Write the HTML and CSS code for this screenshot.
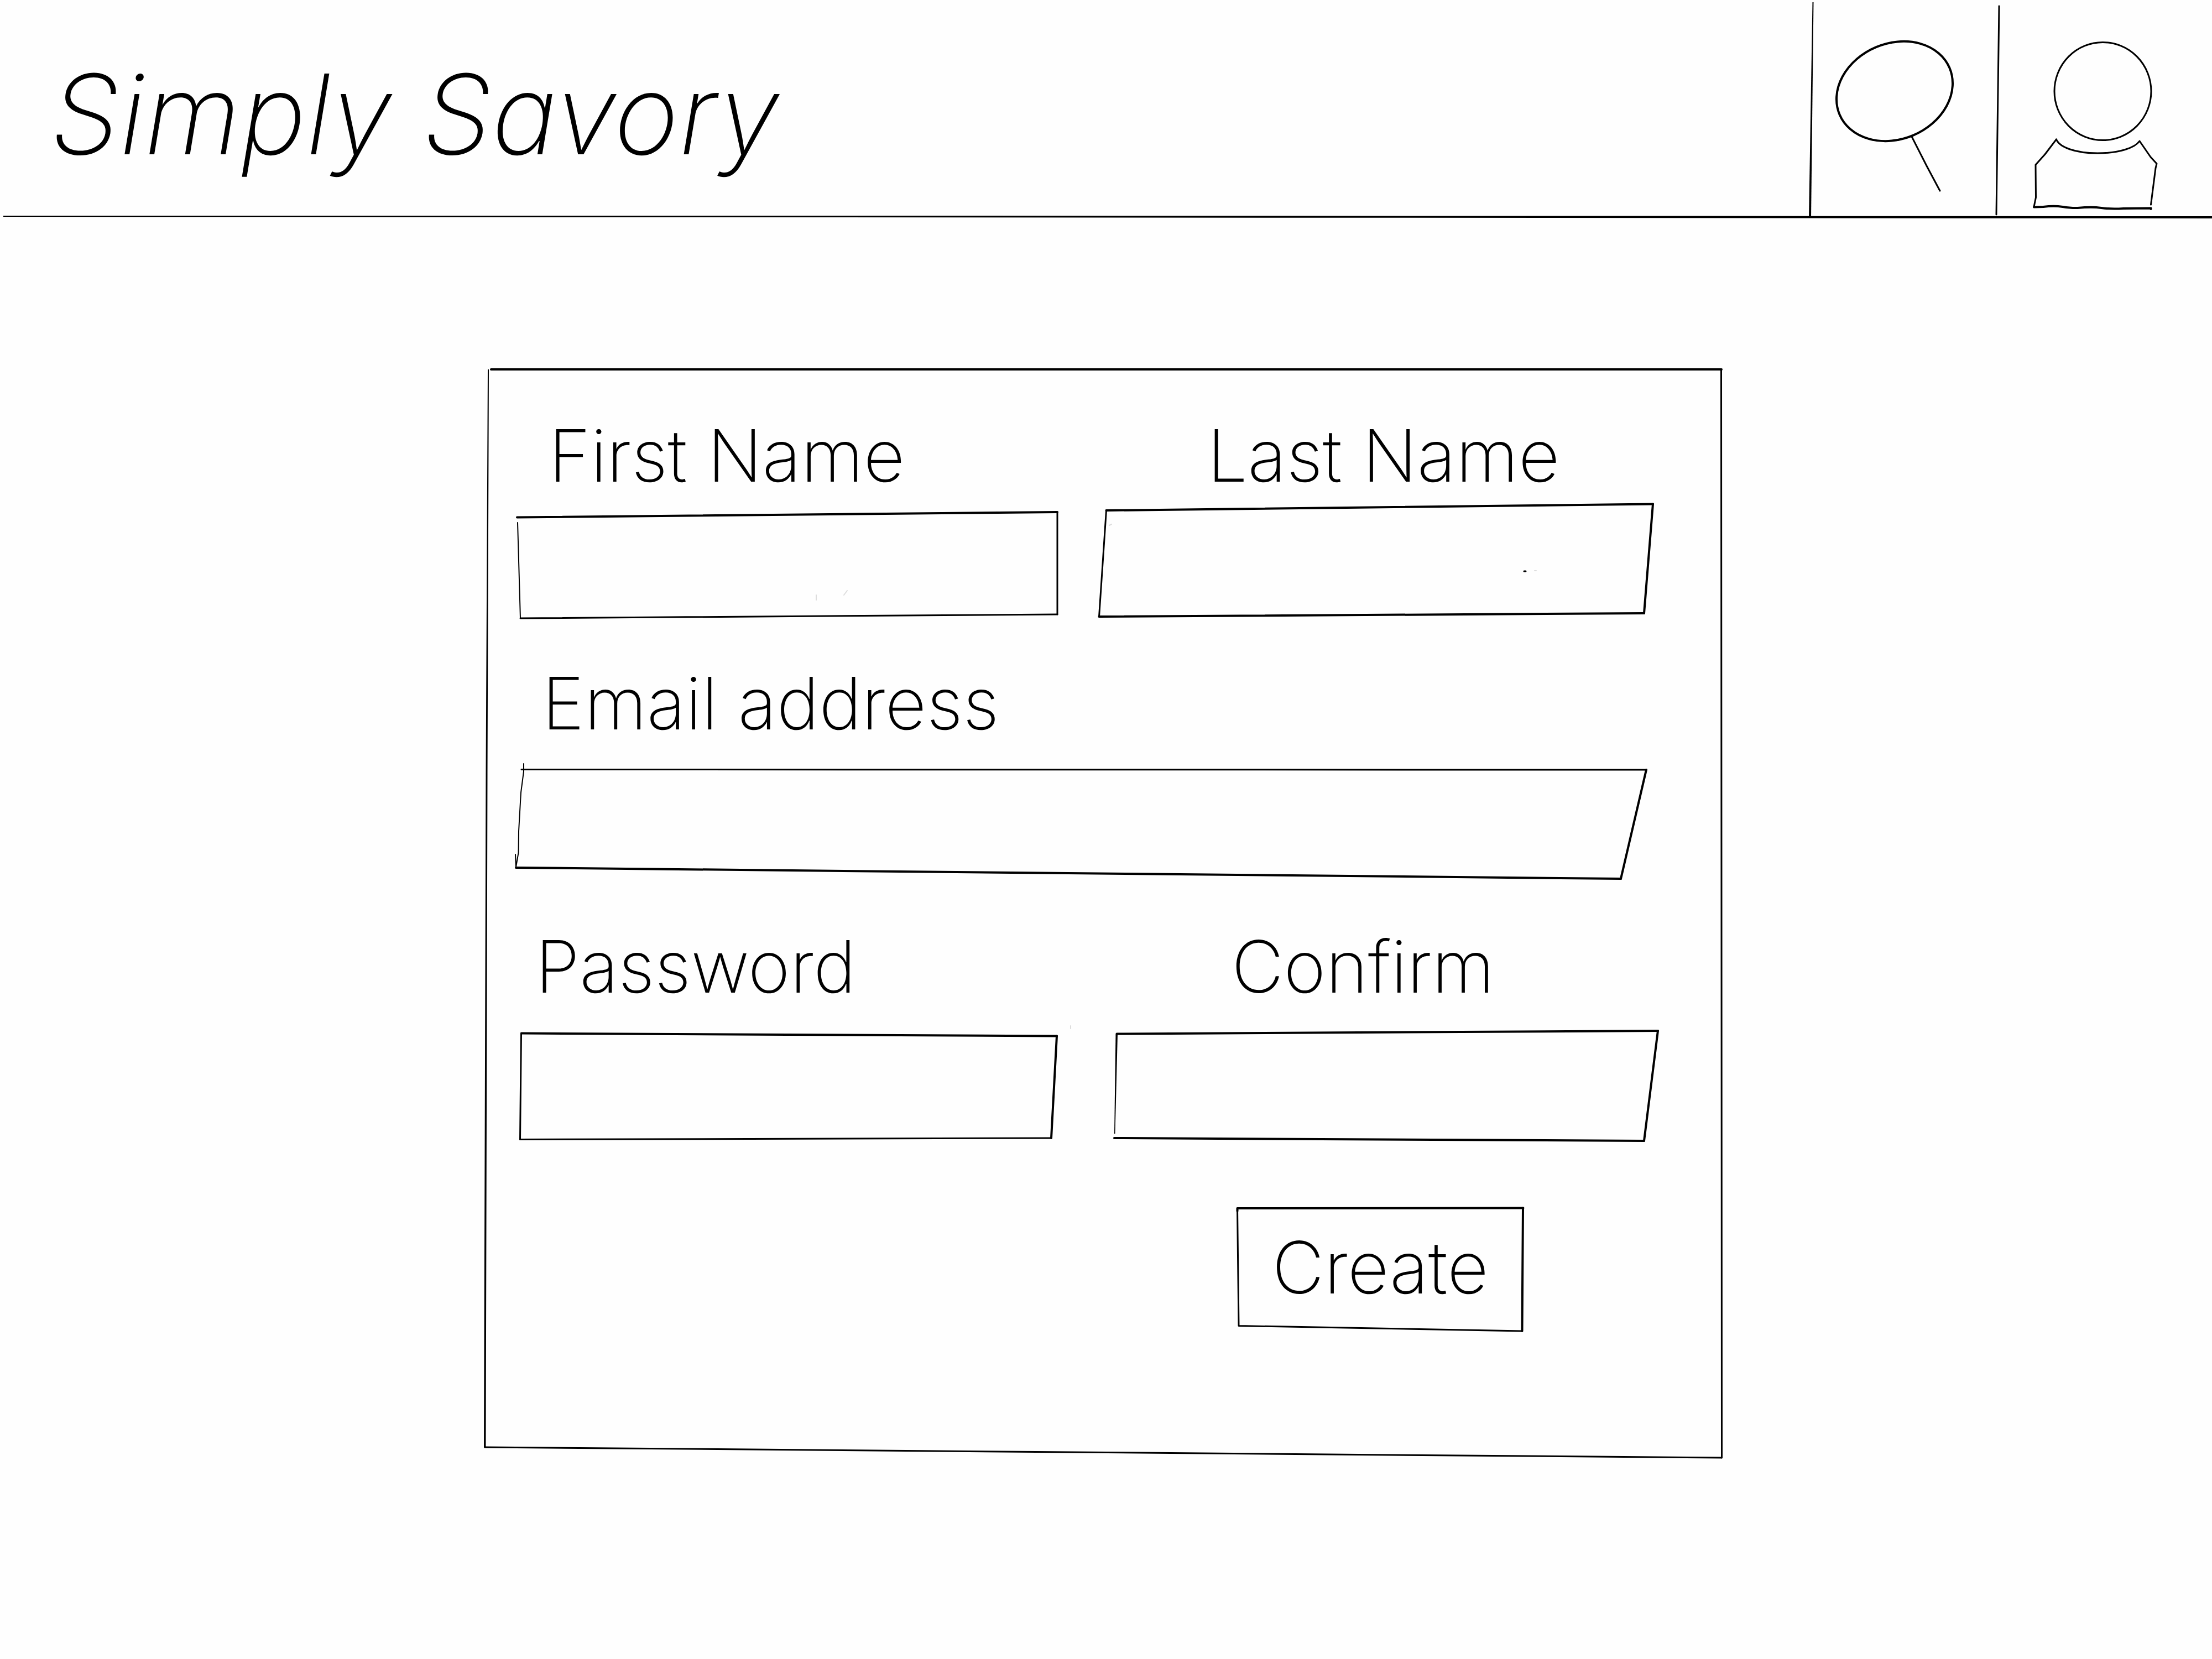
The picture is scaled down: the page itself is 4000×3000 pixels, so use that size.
FILE: index.html
```html
<!DOCTYPE html>
<html lang="en">
<head>
<meta charset="utf-8">
<title>Simply Savory</title>
<link rel="stylesheet" href="styles.css">
</head>
<body>
<header class="topbar">
  <h1 class="brand">Simply Savory</h1>
  <nav class="actions" aria-label="Site">
    <button class="action action-search" type="button" aria-label="Search">
      <svg class="ink" viewBox="3273 0 337 392" aria-hidden="true">
        <path class="taper" d="M3277.500 4 H3279.500 L3275 394 H3271 Z"/>
        <ellipse class="bold" cx="3426" cy="165" rx="108" ry="86.500" transform="rotate(-23 3426 165)"/>
        <path class="mid" d="M3457 247 L3484 300 L3508 345"/>
      </svg>
    </button>
    <button class="action action-account" type="button" aria-label="Account">
      <svg class="ink" viewBox="3610 0 390 392" aria-hidden="true">
        <path class="mid" d="M3615 11 L3612.500 200 L3610 388"/>
        <ellipse class="mid" cx="3802.500" cy="165" rx="87.500" ry="88.500"/>
        <path class="mid" d="M3718.500 252 C3724 266 3752 277 3793 277 C3833 277 3861 267 3869 255 L3889 284 L3900 296 L3898 304 L3889.500 370"/>
        <path class="mid" d="M3718.500 252 L3698 279 L3681 298 L3681.500 357 L3678 374"/>
        <path class="bold" d="M3678 374.500 L3695 374 Q3714 371.500 3730 374 T3757 376 Q3783 373.500 3800 376 T3840 377 L3889.500 376.500 V378"/>
      </svg>
    </button>
  </nav>
  <svg class="ink rule" viewBox="0 388 4000 8" preserveAspectRatio="none" aria-hidden="true">
    <path class="taper" d="M6 390 L1500 390 L4000 391 V395 L1500 393 L6 392 Z"/>
  </svg>
</header>

<main class="page">
  <form class="card">
    <svg class="ink card-frame" viewBox="876 668 2238 1968" preserveAspectRatio="none" aria-hidden="true">
      <path class="taper" d="M882 668 H884 L881.500 1400 L878.500 2617 H875 L878.500 1400 Z"/>
      <path class="bold" d="M888 668 H3113"/>
      <path class="mid" d="M3112.500 668 L3113.500 2636"/>
      <path class="mid" d="M876.500 2617 L3113.500 2636"/>
    </svg>

    <div class="row row-names">
      <div class="field">
        <label class="label indent-3" for="first">First Name</label>
        <div class="box">
          <input class="input" id="first" type="text" autocomplete="given-name">
          <svg class="ink" viewBox="932 908 980 208" preserveAspectRatio="none" aria-hidden="true">
            <path class="bold" d="M935 935.500 L1912 926"/>
            <path class="mid" d="M1912 926 V1111"/>
            <path class="mid" d="M1912 1111 L941 1118"/>
            <path class="fine" d="M941 1118 L936 945"/>
            <path class="smudge" d="M1476 1076 v9 M1532 1068 l-6 8"/>
          </svg>
        </div>
      </div>
      <div class="field">
        <label class="label indent-4" for="last">Last Name</label>
        <div class="box">
          <input class="input" id="last" type="text" autocomplete="family-name">
          <svg class="ink" viewBox="1987 908 1011 208" preserveAspectRatio="none" aria-hidden="true">
            <path class="bold" d="M2000.500 923 L2989 911.500"/>
            <path class="bold" d="M2989 911.500 L2973 1109"/>
            <path class="bold" d="M2973 1109 L1987.500 1115"/>
            <path class="mid" d="M1987.500 1115 L2000.500 923"/>
            <path class="mid" d="M2756 1033 h3"/>
            <path class="smudge" d="M2775 1032 h3 M2006 950 l4 -2"/>
          </svg>
        </div>
      </div>
    </div>

    <div class="row row-email">
      <div class="field field-wide">
        <label class="label indent-2" for="email">Email address</label>
        <div class="box">
          <input class="input" id="email" type="email" autocomplete="email">
          <svg class="ink" viewBox="932 1380 2066 208" preserveAspectRatio="none" aria-hidden="true">
            <path class="fine" d="M947 1381 L947 1395 L942 1433 L938 1503 L937.500 1542 L933 1568 L932 1545"/>
            <path class="mid" d="M943 1391.500 L2977 1392"/>
            <path class="bold" d="M2977 1392 L2931 1589"/>
            <path class="bold" d="M2931 1589 L933 1569"/>
          </svg>
        </div>
      </div>
    </div>

    <div class="row row-password">
      <div class="field">
        <label class="label indent-1" for="password">Password</label>
        <div class="box">
          <input class="input" id="password" type="password" autocomplete="new-password">
          <svg class="ink" viewBox="932 1856 980 208" preserveAspectRatio="none" aria-hidden="true">
            <path class="bold" d="M943 1868.500 L1911 1873.500"/>
            <path class="bold" d="M1911 1873.500 L1901 2058"/>
            <path class="mid" d="M1901 2058 L940.500 2060.500"/>
            <path class="mid" d="M940.500 2060.500 L942.500 1868.500"/>
            <path class="smudge" d="M1936 1855 v5"/>
          </svg>
        </div>
      </div>
      <div class="field">
        <label class="label indent-5" for="confirm">Confirm</label>
        <div class="box">
          <input class="input" id="confirm" type="password" autocomplete="new-password">
          <svg class="ink" viewBox="1987 1856 1011 208" preserveAspectRatio="none" aria-hidden="true">
            <path class="bold" d="M2019.500 1869.500 L2998 1864"/>
            <path class="bold" d="M2998 1864 L2973 2063"/>
            <path class="bold" d="M2973 2063 L2015 2058"/>
            <path class="taper" d="M2017.500 1869.500 H2021 L2016.500 2050 H2015 Z"/>
          </svg>
        </div>
      </div>
    </div>

    <div class="row">
      <div class="submit-cell">
        <button class="submit" type="submit">
          <svg class="ink" viewBox="2236 2184 520 216" preserveAspectRatio="none" aria-hidden="true">
            <path class="bold" d="M2237.500 2190 V2185 L2754.500 2184.500"/>
            <path class="bold" d="M2754 2184.500 L2752.500 2407"/>
            <path class="mid" d="M2752.500 2407 L2240 2397.500 L2237.500 2185"/>
          </svg>
          <span class="submit-text">Create</span>
        </button>
      </div>
    </div>
  </form>
</main>
</body>
</html>
```
FILE: styles.css
```css
* {
  box-sizing: border-box;
}

body {
  margin: 0;
  background: #fefefe;
  color: #000;
  font-family: Inter, "Liberation Sans", sans-serif;
  font-size: 130px;
  font-weight: 200;
  line-height: 152px;
}

button,
input {
  margin: 0;
  padding: 0;
  border: 0;
  background: transparent;
  color: inherit;
  font: inherit;
}

/* Pen strokes */
.ink {
  display: block;
  width: 100%;
  height: 100%;
  overflow: visible;
  fill: none;
  stroke: #000;
  stroke-linecap: round;
  stroke-linejoin: round;
  pointer-events: none;
}

.ink * {
  vector-effect: non-scaling-stroke;
}

.fine {
  stroke-width: 2px;
}

.mid {
  stroke-width: 3px;
}

.bold {
  stroke-width: 4px;
}

.taper {
  fill: #000;
  stroke: none;
}

.smudge {
  stroke: #ddd;
  stroke-width: 2px;
}

/* Top bar */
.topbar {
  position: relative;
  display: flex;
  justify-content: space-between;
  height: 392px;
}

.brand {
  margin: 0;
  padding: 88px 0 0 92px;
  font-size: 200px;
  font-style: italic;
  font-weight: 200;
  line-height: 236px;
}

.actions {
  display: flex;
}

.action-search {
  width: 337px;
}

.action-account {
  width: 390px;
}

.rule {
  position: absolute;
  left: 0;
  bottom: -4px;
  height: 8px;
}

/* Sign-up card */
.page {
  display: grid;
  grid-template-columns: 876fr 2238fr 886fr;
  padding: 276px 0 364px;
}

.card {
  grid-column: 2;
  position: relative;
  padding: 80px 0 236px;
}

.card-frame {
  position: absolute;
  inset: 0;
}

.row {
  display: grid;
  grid-template-columns: 56fr 980fr 75fr 1011fr 116fr;
}

.row-names {
  margin-bottom: 80px;
}

.row-email {
  margin-bottom: 84px;
}

.row-password {
  margin-bottom: 120px;
}

.field {
  display: flex;
  flex-direction: column;
  gap: 32px;
  grid-column: 2;
}

.field + .field {
  grid-column: 4;
}

.field-wide {
  grid-column: 2 / 5;
}

.row-names .field {
  gap: 8px;
}

.indent-1 {
  padding-left: 36px;
}

.indent-2 {
  padding-left: 48px;
}

.indent-3 {
  padding-left: 60px;
}

.indent-4 {
  padding-left: 196px;
}

.indent-5 {
  padding-left: 240px;
}

.box {
  display: grid;
  height: 208px;
}

.box > * {
  grid-area: 1 / 1;
}

.input {
  width: 100%;
  padding: 0 48px;
  outline: 0;
}

.submit-cell {
  grid-column: 4;
  padding-left: 249px;
}

.submit {
  display: grid;
  width: 520px;
  height: 216px;
}

.submit > * {
  grid-area: 1 / 1;
}

.submit-text {
  align-self: center;
}
```
